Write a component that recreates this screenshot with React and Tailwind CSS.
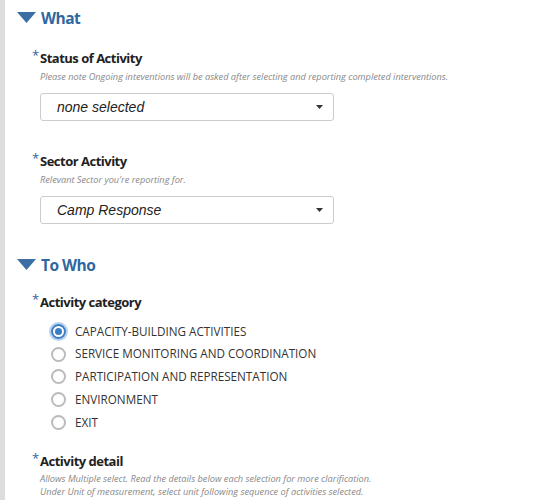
import React from 'react';

const options = [
  'CAPACITY-BUILDING ACTIVITIES',
  'SERVICE MONITORING AND COORDINATION',
  'PARTICIPATION AND REPRESENTATION',
  'ENVIRONMENT',
  'EXIT',
];

function SectionHeader({ title, className = '' }) {
  return (
    <div className={`flex items-center h-[24px] ${className}`}>
      <svg width="19" height="12" viewBox="0 0 19 12" className="ml-[17px] mr-[5px]">
        <polygon points="0,0 19,0 9.5,11" fill="#3a6ea5" />
      </svg>
      <h2 className="text-[15.5px] font-bold tracking-[-0.5px] text-[#2f67a0] leading-[24px]">{title}</h2>
    </div>
  );
}

function Label({ children, className = '' }) {
  return (
    <div className={`relative pl-[40px] h-[18px] flex items-center ${className}`}>
      <span className="absolute left-[32px] top-[-4px] text-[13px] text-[#2f67a0]">*</span>
      <span className="text-[13px] font-bold tracking-[-0.5px] text-[#222]">{children}</span>
    </div>
  );
}

function Hint({ children, className = '' }) {
  return (
    <p className={`pl-[40px] text-[9.2px] italic text-[#888] leading-[13px] ${className}`}>{children}</p>
  );
}

function Select({ value, className = '' }) {
  return (
    <div className={`ml-[40px] w-[294px] h-[28px] border border-[#ccc] rounded-[3px] bg-white flex items-center justify-between pl-[16px] pr-[10px] ${className}`}>
      <span className="italic text-[14px] text-[#222] font-['Liberation_Sans',Arial,sans-serif]">{value}</span>
      <svg width="7" height="4" viewBox="0 0 7 4">
        <polygon points="0,0 7,0 3.5,4" fill="#333" />
      </svg>
    </div>
  );
}

function Radio({ label, checked }) {
  return (
    <div className="flex items-center h-[22.75px] pl-[51px]">
      {checked ? (
        <span className="w-[15px] h-[15px] rounded-full border-[2px] border-[#3b7dc4] shadow-[0_0_0_2px_#b8d3f0] flex items-center justify-center">
          <span className="w-[7px] h-[7px] rounded-full bg-[#3b7dc4]" />
        </span>
      ) : (
        <span className="w-[15px] h-[15px] rounded-full border-[2px] border-[#bbb]" />
      )}
      <span className="ml-[9px] text-[11.7px] text-[#333]">{label}</span>
    </div>
  );
}

export default function App() {
  return (
    <div className="w-[556px] h-[500px] overflow-hidden bg-white flex font-['Open_Sans',sans-serif]">
      <div className="w-[5px] bg-[#ddd] shrink-0" />
      <div className="flex-1 -ml-[5px]">
        <SectionHeader title="What" className="mt-[6px]" />

        <Label className="mt-[20px]">Status of Activity</Label>
        <Hint className="mt-[2px]">Please note Ongoing inteventions will be asked after selecting and reporting completed interventions.</Hint>
        <Select value="none selected" className="mt-[10px]" />

        <Label className="mt-[32px]">Sector Activity</Label>
        <Hint className="mt-[2px]">Relevant Sector you're reporting for.</Hint>
        <Select value="Camp Response" className="mt-[10px]" />

        <SectionHeader title="To Who" className="mt-[29px]" />

        <Label className="mt-[17px]">Activity category</Label>
        <div className="mt-[8px]">
          {options.map((o, i) => (
            <Radio key={o} label={o} checked={i === 0} />
          ))}
        </div>

        <Label className="mt-[19px]">Activity detail</Label>
        <Hint className="mt-[1px]">
          Allows Multiple select. Read the details below each selection for more clarification.
          <br />
          Under Unit of measurement, select unit following sequence of activities selected.
        </Hint>
      </div>
    </div>
  );
}
